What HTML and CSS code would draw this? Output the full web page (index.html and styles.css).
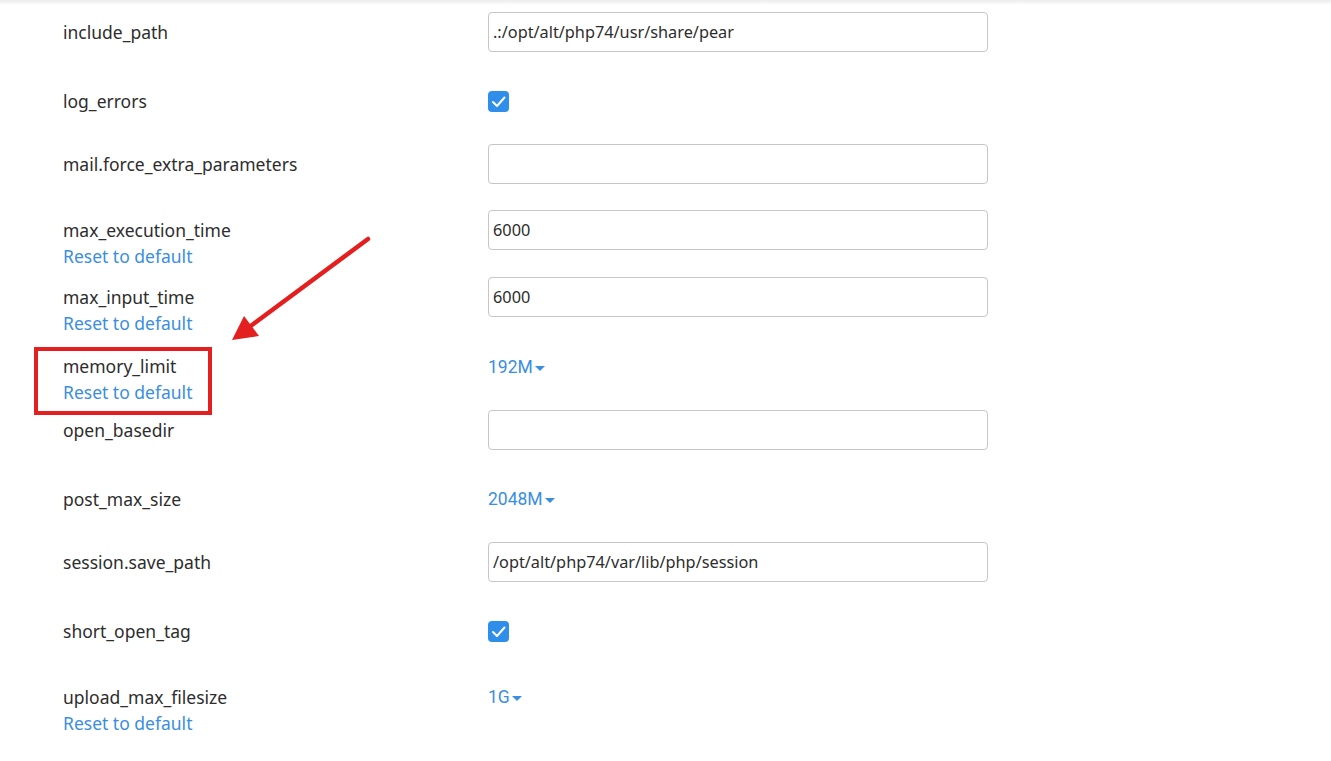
FILE: index.html
```html
<!DOCTYPE html>
<html>
<head>
<meta charset="utf-8">
<link rel="stylesheet" href="styles.css">
</head>
<body>
<div class="page">
  <div class="topshade"></div>
  <div class="list">
    <div class="row">
      <div class="label">include_path</div>
      <div class="value"><div class="input">.:/opt/alt/php74/usr/share/pear</div></div>
    </div>
    <div class="row">
      <div class="label low">log_errors</div>
      <div class="value"><div class="checkwrap"><span class="check"><svg viewBox="0 0 21 21" width="21" height="21"><path d="M5 11 L9 15 L16.5 6.5" fill="none" stroke="#fff" stroke-width="2" stroke-linecap="round" stroke-linejoin="round"/></svg></span></div></div>
    </div>
    <div class="row">
      <div class="label">mail.force_extra_parameters</div>
      <div class="value"><div class="input"></div></div>
    </div>
    <div class="row">
      <div class="label">max_execution_time<a class="reset">Reset to default</a></div>
      <div class="value"><div class="input">6000</div></div>
    </div>
    <div class="row">
      <div class="label">max_input_time<a class="reset">Reset to default</a></div>
      <div class="value"><div class="input">6000</div></div>
    </div>
    <div class="row">
      <div class="label mem">memory_limit<a class="reset">Reset to default</a></div>
      <div class="value"><div class="dd">192M<span class="caret"></span></div></div>
    </div>
    <div class="row">
      <div class="label">open_basedir</div>
      <div class="value"><div class="input"></div></div>
    </div>
    <div class="row">
      <div class="label low">post_max_size</div>
      <div class="value"><div class="dd">2048M<span class="caret"></span></div></div>
    </div>
    <div class="row">
      <div class="label">session.save_path</div>
      <div class="value"><div class="input">/opt/alt/php74/var/lib/php/session</div></div>
    </div>
    <div class="row">
      <div class="label low">short_open_tag</div>
      <div class="value"><div class="checkwrap"><span class="check"><svg viewBox="0 0 21 21" width="21" height="21"><path d="M5 11 L9 15 L16.5 6.5" fill="none" stroke="#fff" stroke-width="2" stroke-linecap="round" stroke-linejoin="round"/></svg></span></div></div>
    </div>
    <div class="row">
      <div class="label low">upload_max_filesize<a class="reset">Reset to default</a></div>
      <div class="value"><div class="dd">1G<span class="caret"></span></div></div>
    </div>
  </div>
  <div class="highlight"></div>
  <svg class="arrow" width="1331" height="761" viewBox="0 0 1331 761">
    <line x1="368" y1="239" x2="252" y2="325" stroke="#e3201f" stroke-width="4.5" stroke-linecap="round"/>
    <polygon points="232,340 244,316 259,336" fill="#e3201f"/>
  </svg>
</div>
</body>
</html>
```
FILE: styles.css
```css
html, body {
  margin: 0;
  padding: 0;
  background: #fff;
}
body {
  font-family: "Noto Sans", "Open Sans", sans-serif;
  font-size: 16px;
  color: #333;
}
.page {
  position: relative;
  width: 1331px;
  height: 761px;
  overflow: hidden;
}
.topshade {
  height: 5px;
  background: linear-gradient(#ececec, #fff);
  margin-bottom: 7px;
}
.list {
  padding-left: 63px;
}
.row {
  display: flex;
  align-items: flex-start;
}
.label {
  width: 425px;
  flex: none;
  padding: 7px 0 8px;
  font-size: 17.5px;
  line-height: 26px;
  display: flex;
  flex-direction: column;
  color: #2d2d2d;
}
.label.low {
  padding-top: 10px;
}
.label.mem {
  padding-top: 9px;
  padding-bottom: 4px;
}
.reset {
  color: #3a8ee0;
  cursor: pointer;
}
.value {
  padding-bottom: 26px;
}
.input {
  box-sizing: border-box;
  width: 500px;
  height: 40px;
  border: 1px solid #c6c6c6;
  border-radius: 4px;
  padding: 0 4px;
  font-size: 16.3px;
  line-height: 38px;
  color: #2d2d2d;
}
.checkwrap {
  height: 40px;
  padding-top: 13px;
  box-sizing: border-box;
}
.check {
  display: block;
  width: 21px;
  height: 21px;
  border-radius: 4px;
  background: #2f8ee9;
}
.check svg {
  display: block;
}
.dd {
  height: 40px;
  padding-top: 10px;
  box-sizing: border-box;
  line-height: 26px;
  font-family: Roboto, "Liberation Sans", sans-serif;
  font-size: 17.5px;
  color: #3a8ee0;
  display: flex;
  align-items: flex-start;
}
.caret {
  width: 0;
  height: 0;
  margin-left: 2px;
  margin-top: 12px;
  border-left: 5px solid transparent;
  border-right: 5px solid transparent;
  border-top: 5px solid #3a8ee0;
}
.highlight {
  position: absolute;
  left: 34px;
  top: 347px;
  width: 170px;
  height: 60px;
  border: 4px solid #e3201f;
}
.arrow {
  position: absolute;
  left: 0;
  top: 0;
  pointer-events: none;
}
```
